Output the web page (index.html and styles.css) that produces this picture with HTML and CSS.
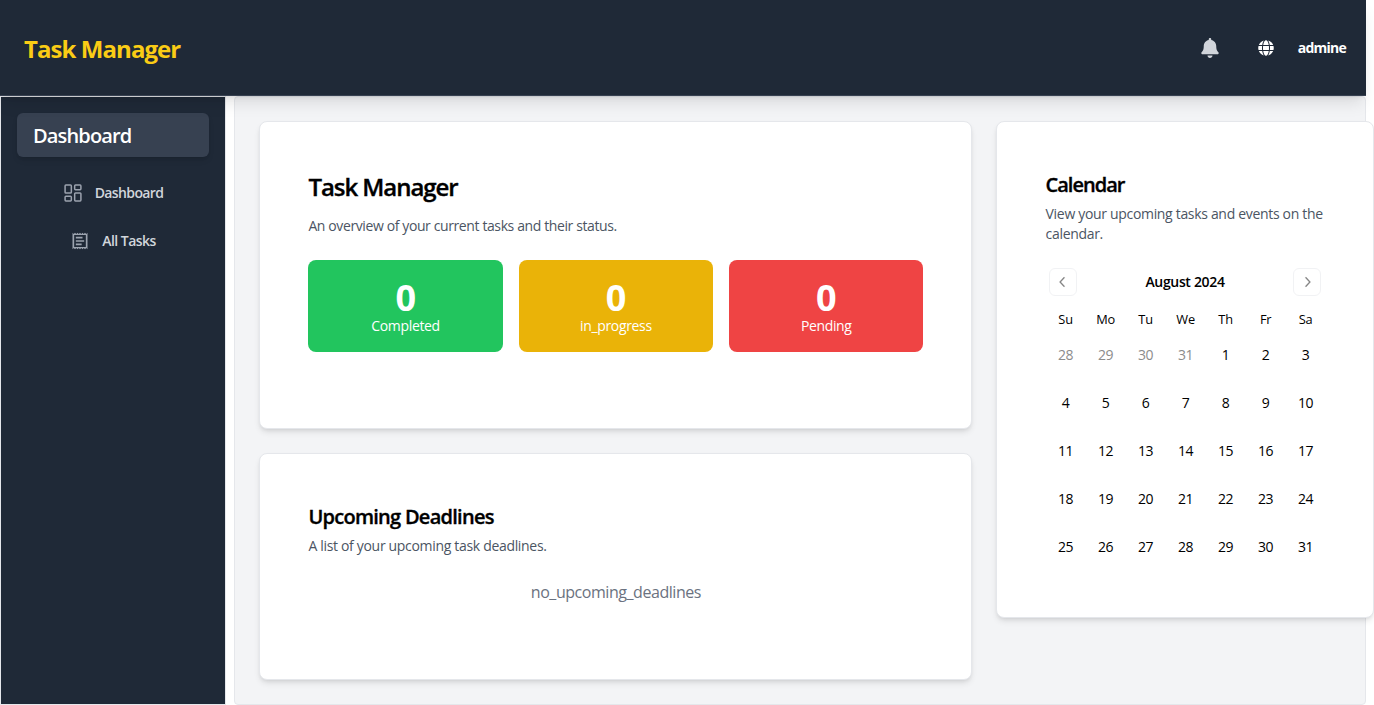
FILE: index.html
```html
<!DOCTYPE html>
<html lang="en">
<head>
<meta charset="utf-8">
<title>Task Manager</title>
<link rel="stylesheet" href="styles.css">
</head>
<body>
<header class="topbar">
  <h1 class="brand">Task Manager</h1>
  <div class="topbar-right">
    <svg class="bell" viewBox="0 0 448 512" fill="currentColor"><path d="M224 512c35.320 0 63.970-28.650 63.970-64H160.030c0 35.350 28.650 64 63.970 64zm215.390-149.710c-19.320-20.760-55.470-51.990-55.470-154.290 0-77.700-54.480-139.900-127.940-155.160V32c0-17.670-14.320-32-31.980-32s-31.980 14.330-31.980 32v20.840C118.560 68.100 64.080 130.300 64.080 208c0 102.300-36.150 133.530-55.470 154.290-6 6.450-8.660 14.160-8.610 21.710.110 16.400 12.980 32 32.100 32h383.800c19.120 0 32-15.600 32.100-32 .050-7.550-2.610-15.270-8.610-21.710z"/></svg>
    <svg class="globe" viewBox="0 0 496 512" fill="currentColor"><path d="M336.500 160C322 70.700 287.800 8 248 8s-74 62.700-88.500 152h177zM152 256c0 22.200 1.200 43.500 3.300 64h185.300c2.100-20.500 3.300-41.800 3.300-64s-1.200-43.500-3.300-64H155.300c-2.100 20.500-3.300 41.800-3.300 64zm324.700-96c-28.600-67.900-86.500-120.400-158-141.600 24.400 33.800 41.200 84.700 50 141.600h108zM177.200 18.400C105.800 39.600 47.800 92.100 19.300 160h108c8.700-56.900 25.500-107.800 49.900-141.600zM487.400 192H372.700c2.100 21 3.300 42.500 3.300 64s-1.200 43-3.300 64h114.600c5.500-20.500 8.600-41.800 8.600-64s-3.100-43.500-8.500-64zM120 256c0-21.500 1.200-43 3.300-64H8.600C3.200 212.500 0 233.800 0 256s3.200 43.500 8.600 64h114.600c-2-21-3.200-42.500-3.200-64zm39.500 96c14.500 89.300 48.700 152 88.500 152s74-62.700 88.500-152h-177zm159.300 141.600c71.400-21.200 129.400-73.700 158-141.600h-108c-8.800 56.900-25.600 107.800-50 141.600zM19.300 352c28.600 67.900 86.500 120.400 158 141.600-24.400-33.800-41.200-84.700-50-141.600h-108z"/></svg>
    <span class="user">admine</span>
  </div>
</header>
<div class="layout">
  <nav class="sidebar">
    <div class="side-title">Dashboard</div>
    <a class="side-link">
      <svg class="side-icon" viewBox="0 0 24 24" fill="none" stroke="currentColor" stroke-width="1.800" stroke-linecap="round" stroke-linejoin="round"><rect x="2.500" y="2.500" width="7.500" height="9.500" rx="1"/><rect x="14" y="2.500" width="7.500" height="5.500" rx="1"/><rect x="14" y="12" width="7.500" height="9.500" rx="1"/><rect x="2.500" y="16" width="7.500" height="5.500" rx="1"/></svg>
      <span>Dashboard</span>
    </a>
    <a class="side-link side-link-tasks">
      <svg class="side-icon" viewBox="0 0 24 24" fill="currentColor"><path d="M19.500 3.500 18 2l-1.500 1.500L15 2l-1.500 1.500L12 2l-1.500 1.500L9 2 7.500 3.500 6 2 4.500 3.500 3 2v20l1.500-1.500L6 22l1.500-1.500L9 22l1.500-1.500L12 22l1.500-1.500L15 22l1.500-1.500L18 22l1.500-1.500L21 22V2l-1.500 1.500zM19 19.090H5V4.910h14v14.180zM7 15h7v2H7zm0-4h10v2H7zm0-4h8v2H7z"/></svg>
      <span>All Tasks</span>
    </a>
  </nav>
  <main class="main">
    <div class="column">
      <section class="card overview">
        <h2 class="title-lg">Task Manager</h2>
        <p class="desc desc-overview">An overview of your current tasks and their status.</p>
        <div class="tiles">
          <div class="tile green"><b>0</b><span>Completed</span></div>
          <div class="tile yellow"><b>0</b><span>in_progress</span></div>
          <div class="tile red"><b>0</b><span>Pending</span></div>
        </div>
      </section>
      <section class="card deadlines">
        <h3 class="title">Upcoming Deadlines</h3>
        <p class="desc">A list of your upcoming task deadlines.</p>
        <p class="empty">no_upcoming_deadlines</p>
      </section>
    </div>
    <section class="card calendar">
      <h3 class="title">Calendar</h3>
      <p class="desc">View your upcoming tasks and events on the<br>calendar.</p>
      <div class="caption">
        <button class="nav-btn"><svg viewBox="0 0 15 15" fill="currentColor" stroke="currentColor" stroke-width=".3"><path d="M8.842 3.135a.5.500 0 0 1 .023.707L5.435 7.500l3.430 3.658a.5.500 0 0 1-.73.684l-3.750-4a.5.500 0 0 1 0-.684l3.750-4a.5.500 0 0 1 .707-.023z"/></svg></button>
        <span>August 2024</span>
        <button class="nav-btn"><svg viewBox="0 0 15 15" fill="currentColor" stroke="currentColor" stroke-width=".3"><path d="M6.158 3.135a.5.500 0 0 1 .707.023l3.750 4a.5.500 0 0 1 0 .684l-3.750 4a.5.500 0 1 1-.73-.684L9.565 7.500l-3.430-3.658a.5.500 0 0 1 .023-.707z"/></svg></button>
      </div>
      <div class="weekdays"><span>Su</span><span>Mo</span><span>Tu</span><span>We</span><span>Th</span><span>Fr</span><span>Sa</span></div>
      <div class="days">
        <span class="out">28</span><span class="out">29</span><span class="out">30</span><span class="out">31</span><span>1</span><span>2</span><span>3</span>
        <span>4</span><span>5</span><span>6</span><span>7</span><span>8</span><span>9</span><span>10</span>
        <span>11</span><span>12</span><span>13</span><span>14</span><span>15</span><span>16</span><span>17</span>
        <span>18</span><span>19</span><span>20</span><span>21</span><span>22</span><span>23</span><span>24</span>
        <span>25</span><span>26</span><span>27</span><span>28</span><span>29</span><span>30</span><span>31</span>
      </div>
    </section>
  </main>
</div>
</body>
</html>
```

FILE: styles.css
```css
* { box-sizing: border-box; margin: 0; }
body {
  width: 1374px;
  height: 705px;
  overflow: hidden;
  background: #fff;
  color: #000;
  font: 14px/20px "Segoe UI", "Open Sans", "Noto Sans", sans-serif;
}
.topbar {
  position: relative;
  z-index: 2;
  display: flex;
  align-items: center;
  justify-content: space-between;
  width: 1366px;
  height: 96px;
  padding: 3px 20px 0 24px;
  background: #1f2937;
  border-bottom: 1px solid #374151;
  box-shadow: 0 10px 15px -3px rgba(0,0,0,.1), 0 4px 6px -4px rgba(0,0,0,.1);
}
.brand { color: #facc15; font-size: 24px; line-height: 32px; font-weight: 700; letter-spacing: -.93px; }
.topbar-right { display: flex; align-items: center; color: #fff; padding-bottom: 3px; }
.bell { width: 18px; height: 20px; color: #d1d5db; margin-right: 39px; }
.globe { width: 16px; height: 16px; margin-right: 24px; }
.user { font-weight: 700; letter-spacing: -.75px; }

.layout { display: flex; gap: 8px; height: 609px; }
.sidebar {
  flex: none;
  width: 226px;
  padding: 16px;
  background: #1f2937;
  border: 1px solid #e5e7eb;
}
.side-title {
  height: 44px;
  padding: 9px 16px 7px;
  border-radius: 6px;
  background: #374151;
  color: #fff;
  font-size: 20px;
  line-height: 28px;
  font-weight: 600;
  letter-spacing: -.85px;
  margin-bottom: 12px;
  box-shadow: 0 4px 6px -1px rgba(0,0,0,.1), 0 2px 4px -2px rgba(0,0,0,.1);
}
.side-link {
  display: flex;
  align-items: center;
  justify-content: center;
  gap: 12px;
  height: 48px;
  color: #d1d5db;
  font-weight: 600;
  letter-spacing: -.62px;
}
.side-link-tasks { letter-spacing: -.55px; }
.side-icon { width: 20px; height: 20px; color: #9ca3af; }

.main {
  flex: none;
  display: flex;
  align-items: flex-start;
  gap: 24px;
  width: 1132px;
  height: 609px;
  padding: 24px;
  background: #f3f4f6;
  border: 1px solid #e5e7eb;
  border-radius: 4px;
}
.column { flex: none; width: 713px; display: grid; gap: 24px; }
.card {
  padding: 48px 47.600px 48px 48.400px;
  background: #fff;
  border: 1px solid #e5e7eb;
  border-radius: 8px;
  box-shadow: 0 4px 6px -1px rgba(0,0,0,.1), 0 2px 4px -2px rgba(0,0,0,.1);
}
.overview { height: 308px; }
.deadlines { height: 227px; }
.calendar { flex: none; width: 378px; height: 497px; padding-left: 48.600px; padding-right: 47.400px; }
.title-lg, .title { font-weight: 600; -webkit-text-stroke: .35px #000; }
.title-lg { font-size: 24px; line-height: 34px; letter-spacing: -1.050px; }
.title { font-size: 20px; line-height: 30px; letter-spacing: -.73px; }
.calendar .title { letter-spacing: -1px; }
.desc { color: #4b5563; margin-top: 4px; letter-spacing: -.32px; }
.desc-overview { margin-top: 12px; letter-spacing: -.39px; }
.tiles { display: grid; grid-template-columns: repeat(3, 1fr); gap: 16px; margin-top: 24px; }
.tile { display: flex; flex-direction: column; align-items: center; padding: 18px 16px 16px; border-radius: 8px; color: #fff; letter-spacing: -.35px; }
.tile b { font-size: 36px; line-height: 40px; }
.tile span { line-height: 18px; margin: -1px 0 1px; }
.green { background: #22c55e; }
.yellow { background: #eab308; }
.red { background: #ef4444; }
.empty { margin-top: 24px; text-align: center; color: #6b7280; font-size: 16px; line-height: 24px; letter-spacing: -.45px; }
.caption { display: flex; justify-content: space-between; align-items: center; padding: 0 4.600px 0 3.400px; margin-top: 24px; font-weight: 600; letter-spacing: -.33px; }
.nav-btn {
  display: grid;
  place-items: center;
  width: 28px;
  height: 28px;
  padding: 0;
  background: transparent;
  border: 1px solid #e5e7eb;
  border-radius: 6px;
  opacity: .5;
}
.nav-btn svg { width: 16px; height: 16px; }
.weekdays, .days { display: grid; grid-template-columns: repeat(7, 40px); text-align: center; }
.weekdays { margin-top: 13px; font-size: 12.800px; letter-spacing: -.2px; }
.days { grid-auto-rows: 48px; line-height: 48px; margin-top: 2px; letter-spacing: -.3px; }
.out { color: #8c8c8c; }
```
